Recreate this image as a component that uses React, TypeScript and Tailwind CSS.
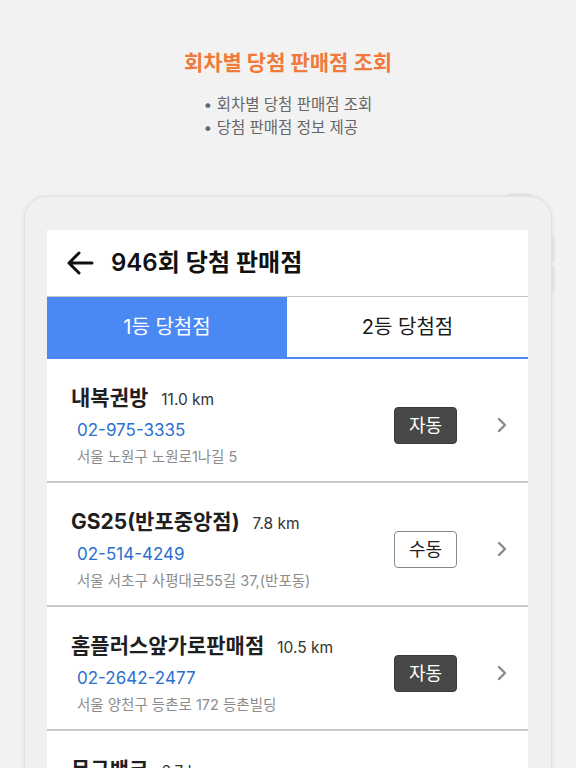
import React from "react";

const font = { fontFamily: "Inter, 'Noto Sans CJK KR', sans-serif" };

type Store = { name: string; dist: string; phone: string; addr: string; type: "자동" | "수동" };

const stores: Store[] = [
  { name: "내복권방", dist: "11.0 km", phone: "02-975-3335", addr: "서울 노원구 노원로1나길 5", type: "자동" },
  { name: "GS25(반포중앙점)", dist: "7.8 km", phone: "02-514-4249", addr: "서울 서초구 사평대로55길 37,(반포동)", type: "수동" },
  { name: "홈플러스앞가로판매점", dist: "10.5 km", phone: "02-2642-2477", addr: "서울 양천구 등촌로 172 등촌빌딩", type: "자동" },
  { name: "문구뱅크", dist: "6.7 km", phone: "02-000-0000", addr: "서울", type: "자동" },
];

function Row({ s }: { s: Store }) {
  return (
    <div className="flex h-[124px] border-b-2 border-[#c9c9c9] pl-[24px] pr-[20px]">
      <div className="flex flex-1 flex-col pt-[25px]">
        <div className="flex items-baseline">
          <span className="text-[21px] font-bold leading-[28px] text-[#1f1f1f]">{s.name}</span>
          <span className="ml-[13px] text-[15.5px] leading-[28px] text-[#333]">{s.dist}</span>
        </div>
        <div className="ml-[6px] mt-[4px] text-[17px] leading-[24px] text-[#2b6fcf]">{s.phone}</div>
        <div className="ml-[6px] mt-[5px] text-[14.5px] leading-[20px] text-[#8c8c8c]">{s.addr}</div>
      </div>
      <div className="flex items-center pt-[10px]">
        {s.type === "자동" ? (
          <div className="flex h-[37px] w-[63px] items-center justify-center rounded-[4px] border border-[#3a3a3a] bg-[#484848] text-[18px] text-white">
            {s.type}
          </div>
        ) : (
          <div className="flex h-[37px] w-[63px] items-center justify-center rounded-[4px] border border-[#8a8a8a] bg-white text-[18px] text-[#222]">
            {s.type}
          </div>
        )}
        <svg className="ml-[39px]" width="12" height="18" viewBox="0 0 12 18">
          <polyline points="3,3 9,9 3,15" fill="none" stroke="#8a8a8a" strokeWidth="2.4" strokeLinecap="round" strokeLinejoin="round" />
        </svg>
      </div>
    </div>
  );
}

export default function App() {
  return (
    <div className="h-[768px] w-[576px] overflow-hidden bg-[#f2f2f2]" style={font}>
      <div className="flex flex-col items-center pt-[47px]">
        <h1 className="text-[21px] font-bold leading-[32px] text-[#f07a3c]">회차별 당첨 판매점 조회</h1>
        <div className="mt-[14px] flex flex-col text-[15.5px] leading-[23px] text-[#666]">
          <div>• 회차별 당첨 판매점 조회</div>
          <div>• 당첨 판매점 정보 제공</div>
        </div>
      </div>
      <div className="relative ml-[24px] mt-[57px] h-[700px] w-[528px]">
        <div className="absolute right-[20px] top-[-3px] h-[6px] w-[24px] rounded-[2px] bg-[#e7e8ea]" />
        <div className="absolute right-[-3px] top-[40px] h-[26px] w-[6px] rounded-[2px] bg-[#e7e8ea]" />
        <div className="absolute right-[-3px] top-[70px] h-[26px] w-[6px] rounded-[2px] bg-[#e7e8ea]" />
        <div className="relative h-full rounded-t-[22px] border border-[#e0e1e3] bg-[#eef0f2] pl-[22px] pr-[23px] pt-[33px] shadow-[0_0_4px_rgba(0,0,0,0.08)]">
          <div className="h-full bg-white">
            <div className="flex h-[66px] items-center pl-[19px]">
              <svg width="28" height="26" viewBox="0 0 28 26">
                <path d="M26 13H3M13 3L3 13l10 10" fill="none" stroke="#111" strokeWidth="3" strokeLinecap="round" strokeLinejoin="round" />
              </svg>
              <span className="ml-[17px] text-[24px] font-semibold text-[#111]">946회 당첨 판매점</span>
            </div>
            <div className="flex h-[63px] border-t border-b-2 border-t-[#c4c4c4] border-b-[#4a89f3]">
              <div className="flex w-[240px] items-center justify-center bg-[#4a89f3] text-[20px] text-white">1등 당첨점</div>
              <div className="flex flex-1 items-center justify-center text-[20px] text-[#1a1a1a]">2등 당첨점</div>
            </div>
            {stores.map((s, i) => (
              <Row key={i} s={s} />
            ))}
          </div>
        </div>
      </div>
    </div>
  );
}
